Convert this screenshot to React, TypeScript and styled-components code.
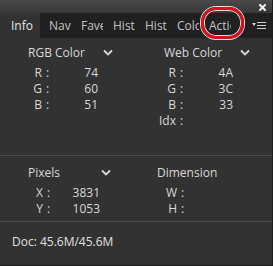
import React from "react";
import styled, { createGlobalStyle } from "styled-components";

const GlobalStyle = createGlobalStyle`
  html, body {
    margin: 0;
    padding: 0;
    background: #323232;
  }
  body {
    font-family: "Open Sans", "Noto Sans", sans-serif;
  }
`;

const tabs = ["Info", "Nav", "Fave", "Hist", "Hist", "Colo", "Actio"];

export default function App() {
  return (
    <Panel>
      <GlobalStyle />
      <TitleBar>
        <CloseButton>
          <svg width="7" height="7" viewBox="0 0 7 7">
            <path d="M1 1 L6 6 M6 1 L1 6" stroke="#f2f2f2" strokeWidth="2" strokeLinecap="square" />
          </svg>
        </CloseButton>
      </TitleBar>
      <TabBar>
        {tabs.map((t, i) => (
          <Tab key={t + i} $active={i === 0}>
            <TabText>{t}</TabText>
          </Tab>
        ))}
        <Highlight />
        <MenuButton>
          <svg width="14" height="9" viewBox="0 0 14 9">
            <path d="M0 2 L4 2 L2 5 Z" fill="#cfcfcf" />
            <rect x="5" y="1" width="9" height="1" fill="#cfcfcf" />
            <rect x="5" y="4" width="9" height="1" fill="#cfcfcf" />
            <rect x="5" y="7" width="9" height="1" fill="#cfcfcf" />
          </svg>
        </MenuButton>
      </TabBar>

      <Section $top={6} $bottom={26}>
        <Group>
          <GroupHeader $labelLeft={28} $width={113}>
            RGB Color
            <Chevron />
          </GroupHeader>
          <ReadoutRow $labelEnd={42} $valueEnd={98} label="R" value="74" />
          <ReadoutRow $labelEnd={42} $valueEnd={98} label="G" value="60" />
          <ReadoutRow $labelEnd={42} $valueEnd={98} label="B" value="51" />
        </Group>
        <Group>
          <GroupHeader $labelLeft={29} $width={115}>
            Web Color
            <Chevron />
          </GroupHeader>
          <ReadoutRow $labelEnd={41} $valueEnd={98} label="R" value="4A" />
          <ReadoutRow $labelEnd={41} $valueEnd={98} label="G" value="3C" />
          <ReadoutRow $labelEnd={41} $valueEnd={98} label="B" value="33" />
          <ReadoutRow $labelEnd={41} $valueEnd={98} label="Idx" value="" />
        </Group>
      </Section>
      <Divider />
      <Section $top={8} $bottom={4}>
        <Group>
          <GroupHeader $labelLeft={28} $width={111}>
            Pixels
            <Chevron />
          </GroupHeader>
          <ReadoutRow $labelEnd={43} $valueEnd={100} label="X" value="3831" />
          <ReadoutRow $labelEnd={43} $valueEnd={100} label="Y" value="1053" />
        </Group>
        <Group>
          <GroupHeader $labelLeft={22} $width={100}>
            Dimension
          </GroupHeader>
          <ReadoutRow $labelEnd={42} $valueEnd={98} label="W" value="" />
          <ReadoutRow $labelEnd={42} $valueEnd={98} label="H" value="" />
        </Group>
      </Section>
      <Divider />
      <DocInfo>Doc: 45.6M/45.6M</DocInfo>
    </Panel>
  );
}

type RowProps = { label: string; value: string; $labelEnd: number; $valueEnd: number };

const ReadoutRow = ({ label, value, $labelEnd, $valueEnd }: RowProps) => (
  <Row $labelEnd={$labelEnd} $valueEnd={$valueEnd}>
    <RowLabel>{label}</RowLabel>
    <Colon>:</Colon>
    <RowValue>{value}</RowValue>
  </Row>
);

const Chevron = () => (
  <ChevronIcon width="10" height="7" viewBox="0 0 10 7">
    <path d="M1 1.5 L5 5.5 L9 1.5" fill="none" stroke="#d8d8d8" strokeWidth="1.8" />
  </ChevronIcon>
);

const Panel = styled.div`
  position: relative;
  width: 273px;
  height: 266px;
  box-sizing: border-box;
  background: #323232;
  border-right: 1px solid #1c1c1c;
  border-bottom: 1px solid #1c1c1c;
  overflow: hidden;
  color: #d8d8d8;
  font-size: 12px;
  display: flex;
  flex-direction: column;
`;

const TitleBar = styled.div`
  height: 13px;
  background: linear-gradient(#4a4a4a, #383838);
  display: flex;
  justify-content: flex-end;
  align-items: center;
  padding-right: 6px;
`;

const CloseButton = styled.div`
  display: flex;
  margin-top: 1px;
`;

const TabBar = styled.div`
  position: relative;
  height: 25px;
  background: #202020;
  display: flex;
  align-items: stretch;
`;

const Tab = styled.div<{ $active?: boolean }>`
  width: ${(p) => (p.$active ? "40px" : "32px")};
  box-sizing: border-box;
  padding-left: ${(p) => (p.$active ? "11px" : "9px")};
  background: ${(p) => (p.$active ? "#323232" : "transparent")};
  color: ${(p) => (p.$active ? "#e6e6e6" : "#c4c4c4")};
  font-size: 12px;
  line-height: 25px;
`;

const TabText = styled.span`
  display: block;
  max-width: 22px;
  white-space: nowrap;
  overflow: hidden;
`;

const Highlight = styled.div`
  position: absolute;
  left: 201px;
  top: -6px;
  width: 43px;
  height: 32px;
  box-sizing: border-box;
  border: 3px solid #d8121d;
  border-radius: 15px;
  box-shadow: 0 0 0 1px rgba(255, 255, 255, 0.85), inset 0 0 0 1px rgba(255, 255, 255, 0.85);
`;

const MenuButton = styled.div`
  margin-left: auto;
  margin-right: 6px;
  display: flex;
  align-items: center;
`;

const Section = styled.div<{ $top: number; $bottom: number }>`
  display: grid;
  grid-template-columns: 135px 1fr;
  padding-top: ${(p) => p.$top}px;
  padding-bottom: ${(p) => p.$bottom}px;
`;

const Group = styled.div`
  display: flex;
  flex-direction: column;
`;

const GroupHeader = styled.div<{ $labelLeft: number; $width: number }>`
  display: flex;
  align-items: center;
  justify-content: space-between;
  box-sizing: border-box;
  width: ${(p) => p.$width}px;
  height: 17px;
  padding-left: ${(p) => p.$labelLeft}px;
  margin-bottom: 4px;
  font-size: 12px;
  color: #d8d8d8;
`;

const ChevronIcon = styled.svg`
  display: block;
`;

const Row = styled.div<{ $labelEnd: number; $valueEnd: number }>`
  display: grid;
  grid-template-columns: ${(p) => p.$labelEnd}px 9px ${(p) => p.$valueEnd - p.$labelEnd - 9}px;
  height: 16px;
  line-height: 16px;
  font-size: 12px;
`;

const RowLabel = styled.span`
  text-align: right;
`;

const Colon = styled.span`
  text-align: center;
  padding-left: 2px;
`;

const RowValue = styled.span`
  text-align: right;
`;

const Divider = styled.div`
  height: 1px;
  background: #4a4a4a;
`;

const DocInfo = styled.div`
  padding: 11px 0 0 12px;
  font-size: 12px;
  color: #e0e0e0;
`;
